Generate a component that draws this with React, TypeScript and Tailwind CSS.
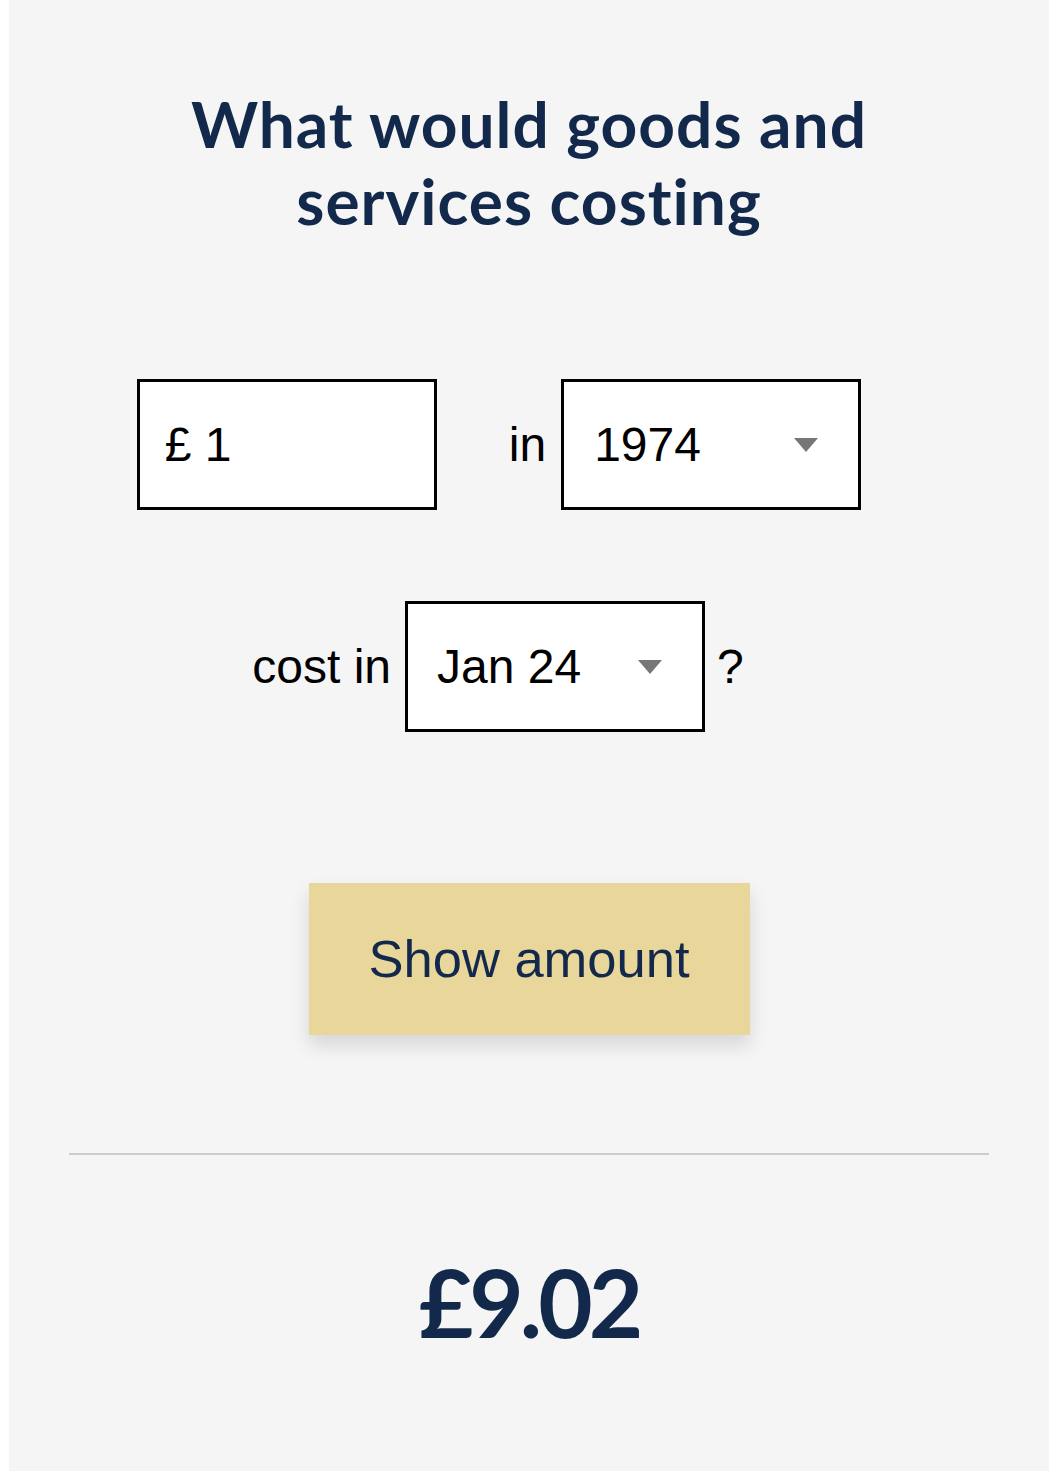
import React from "react";

function Caret() {
  return (
    <svg width="24" height="14" viewBox="0 0 24 14" className="shrink-0">
      <polygon points="0,0 24,0 12,14" fill="#777777" />
    </svg>
  );
}

export default function App() {
  const arial = { fontFamily: '"Liberation Sans", Arial, sans-serif' };
  const geo = { fontFamily: 'Lato, "Open Sans", sans-serif' };
  return (
    <div className="w-full min-h-[1484px] bg-white">
      <div className="ml-[9px] w-[1040px] h-[1471px] bg-[#f5f5f5] flex flex-col items-center">
        <h1
          className="mt-[85px] text-center text-[64px] leading-[77px] font-bold tracking-[1px] text-[#13294b]"
          style={geo}
        >
          What would goods and
          <br />
          services costing
        </h1>

        <div className="w-full flex flex-col items-center pr-[62px] text-[48px] text-black" style={arial}>
          <div className="mt-[140px] ml-[2px] flex items-center">
            <div className="w-[300px] h-[131px] border-[3px] border-black bg-white flex items-center pl-[25px]">
              £ 1
            </div>
            <span className="ml-[72px] mr-[15px]">in</span>
            <div className="w-[300px] h-[131px] border-[3px] border-black bg-white flex items-center pl-[30px] pr-[40px] justify-between">
              <span>1974</span>
              <Caret />
            </div>
          </div>

          <div className="mt-[91px] flex items-center">
            <span className="mr-[14px]">cost in</span>
            <div className="w-[300px] h-[131px] border-[3px] border-black bg-white flex items-center pl-[29px] pr-[40px] justify-between">
              <span>Jan 24</span>
              <Caret />
            </div>
            <span className="ml-[12px]">?</span>
          </div>
        </div>

        <button
          className="mt-[151px] w-[441px] h-[152px] bg-[#e9d69b] text-[#13294b] text-[52.5px] shadow-[0_10px_18px_rgba(0,0,0,0.13)]"
          style={arial}
        >
          Show amount
        </button>

        <div className="mt-[118px] w-[920px] h-[2px] bg-[#cccccc]" />

        <div
          className="mt-[100px] text-[94px] leading-none font-bold tracking-[-4px] text-[#13294b]"
          style={geo}
        >
          £9.02
        </div>
      </div>
    </div>
  );
}
